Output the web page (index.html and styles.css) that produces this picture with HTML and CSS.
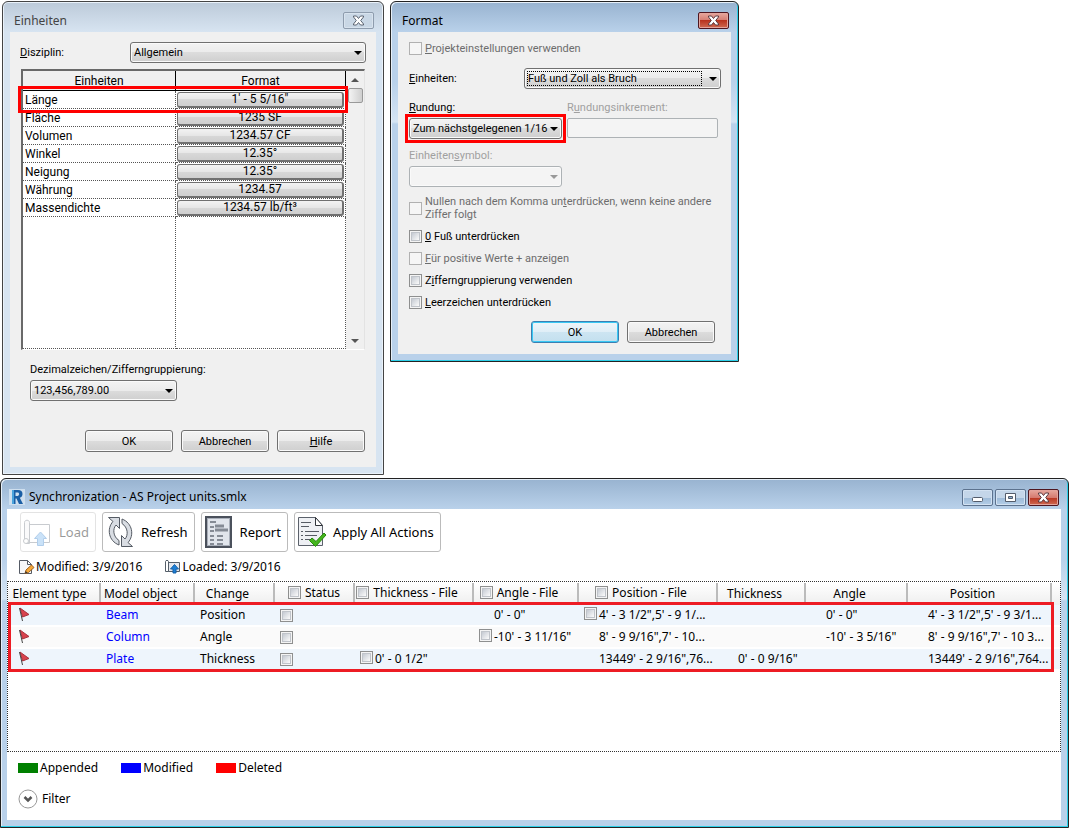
FILE: index.html
```
<!DOCTYPE html>
<html lang="de">
<head>
	<meta charset="utf-8">
	<title>Synchronization - AS Project units.smlx</title>
	<link rel="stylesheet" href="styles.css">
</head>
<body>
	<div class="dialogs">

		<!-- Einheiten -->
		<section class="window inactive units-window">
			<header class="titlebar">
				<h1>Einheiten</h1>
				<button type="button" class="win-button close" aria-label="Schließen">
					<svg width="13" height="11" viewBox="0 0 13 11"><path d="M1.5 1h3l2 2.5L8.500 1h3v1L8.700 5.500l2.800 3.500v1h-3l-2-2.500L4.500 10h-3V9l2.800-3.500L1.500 2z" fill="#fff" stroke="#5b6370"/></svg>
				</button>
			</header>
			<div class="client">
				<div class="field-row">
					<label for="discipline"><u>D</u>isziplin:</label>
					<span class="select-box wide"><select id="discipline"><option>Allgemein</option></select></span>
				</div>

				<div class="units-list">
					<div class="units-scroll">
						<table class="units-table">
							<thead>
								<tr><th>Einheiten</th><th>Format</th></tr>
							</thead>
							<tbody>
								<tr><td>Länge</td><td><button type="button">1' - 5 5/16"</button></td></tr>
								<tr><td>Fläche</td><td><button type="button">1235 SF</button></td></tr>
								<tr><td>Volumen</td><td><button type="button">1234.57 CF</button></td></tr>
								<tr><td>Winkel</td><td><button type="button">12.35°</button></td></tr>
								<tr><td>Neigung</td><td><button type="button">12.35°</button></td></tr>
								<tr><td>Währung</td><td><button type="button">1234.57</button></td></tr>
								<tr><td>Massendichte</td><td><button type="button">1234.57 lb/ft³</button></td></tr>
								<tr class="filler"><td></td><td></td></tr>
							</tbody>
						</table>
					</div>
					<div class="scrollbar">
						<span class="arrow up"></span>
						<span class="thumb"></span>
						<span class="arrow down"></span>
					</div>
					<div class="highlight row-highlight"></div>
				</div>

				<div class="grouping">
					<label for="grouping">Dezimalzeichen/Zifferngruppierung:</label>
					<span class="select-box"><select id="grouping"><option>123,456,789.00</option></select></span>
				</div>

				<div class="actions">
					<button type="button" class="btn">OK</button>
					<button type="button" class="btn">Abbrechen</button>
					<button type="button" class="btn"><u>H</u>ilfe</button>
				</div>
			</div>
		</section>

		<!-- Format -->
		<section class="window format-window">
			<header class="titlebar">
				<h1>Format</h1>
				<button type="button" class="win-button close" aria-label="Schließen">
					<svg width="13" height="11" viewBox="0 0 13 11"><path d="M1.5 1h3l2 2.5L8.500 1h3v1L8.700 5.500l2.800 3.500v1h-3l-2-2.500L4.500 10h-3V9l2.800-3.500L1.500 2z" fill="#fff" stroke="#5b3a40"/></svg>
				</button>
			</header>
			<div class="client">
				<label class="check disabled"><input type="checkbox" disabled><span><u>P</u>rojekteinstellungen verwenden</span></label>

				<div class="field-row">
					<label for="unit"><u>E</u>inheiten:</label>
					<span class="select-box focused"><select id="unit"><option>Fuß und Zoll als Bruch</option></select></span>
				</div>

				<div class="rounding">
					<div class="field">
						<label for="rounding"><u>R</u>undung:</label>
						<div class="marked">
							<span class="select-box"><select id="rounding"><option>Zum nächstgelegenen 1/16</option></select></span>
							<div class="highlight select-highlight"></div>
						</div>
					</div>
					<div class="field disabled">
						<label for="increment">R<u>u</u>ndungsinkrement:</label>
						<input type="text" id="increment" disabled>
					</div>
					<div class="field disabled">
						<label for="symbol">Einheiten<u>s</u>ymbol:</label>
						<span class="select-box"><select id="symbol" disabled><option></option></select></span>
					</div>
				</div>

				<div class="checks">
					<label class="check disabled"><input type="checkbox" disabled><span>Nullen nach dem Komma un<u>t</u>erdrücken, wenn keine andere Ziffer folgt</span></label>
					<label class="check"><input type="checkbox"><span><u>0</u> Fuß unterdrücken</span></label>
					<label class="check disabled"><input type="checkbox" disabled><span><u>F</u>ür positive Werte + anzeigen</span></label>
					<label class="check"><input type="checkbox"><span>Z<u>i</u>fferngruppierung verwenden</span></label>
					<label class="check"><input type="checkbox"><span><u>L</u>eerzeichen unterdrücken</span></label>
				</div>

				<div class="actions">
					<button type="button" class="btn default">OK</button>
					<button type="button" class="btn">Abbrechen</button>
				</div>
			</div>
		</section>
	</div>

	<!-- Synchronization -->
	<section class="window sync-window" lang="en">
		<header class="titlebar">
			<svg class="app-icon" width="16" height="16" viewBox="0 0 16 16">
				<rect width="16" height="16" fill="#cfdfee"/>
				<path d="M3 1h6c3 0 4.500 1.500 4.500 4 0 2-1 3.200-2.700 3.800L14 15h-4L7.500 9.500H6.500V15H3z" fill="#1b5fa5"/>
				<path d="M6.500 3.500H8.500c1 0 1.600.6 1.600 1.600S9.500 7 8.500 7h-2z" fill="#cfdfee"/>
				<path d="M3 1h2v14H3z" fill="#4aa3dc"/>
			</svg>
			<h1>Synchronization - AS Project units.smlx</h1>
			<div class="win-buttons">
				<button type="button" class="win-button" aria-label="Minimize">
					<svg width="13" height="11" viewBox="0 0 13 11"><rect x="1.500" y="5.500" width="10" height="4" rx="1" fill="#fff" stroke="#535c6b"/></svg>
				</button>
				<button type="button" class="win-button" aria-label="Maximize">
					<svg width="13" height="11" viewBox="0 0 13 11"><path d="M1.500 1.500h10v8h-10z" fill="#fff" stroke="#535c6b"/><path d="M4.500 4.500h4v2h-4z" fill="#8fb0d0" stroke="#535c6b"/></svg>
				</button>
				<button type="button" class="win-button close" aria-label="Close">
					<svg width="13" height="11" viewBox="0 0 13 11"><path d="M1.5 1h3l2 2.5L8.500 1h3v1L8.700 5.500l2.800 3.500v1h-3l-2-2.500L4.500 10h-3V9l2.800-3.500L1.500 2z" fill="#fff" stroke="#5b3a40"/></svg>
				</button>
			</div>
		</header>
		<div class="client">
			<div class="toolbar">
				<button type="button" class="tool" disabled>
					<svg width="32" height="32" viewBox="0 0 32 32" fill="none" stroke="#777e88">
						<path d="M8 8.500h19.500v18H6"/>
						<path d="M2.500 24V6.500c0-3 5-3 5 0V24" fill="#f4f5f7"/>
						<circle cx="4" cy="25" r="2.500" fill="#fff"/>
						<path d="M4 27.500h3.500V22"/>
						<path d="M18.500 16l6 6.500h-3v7h-6v-7h-3z" fill="#7db8f0" stroke="#3f87cf"/>
					</svg>
					Load
				</button>
				<button type="button" class="tool">
					<svg width="32" height="34" viewBox="-2 0 32 34" fill="#d9dde3" stroke="#555b64">
						<path d="M2.500 2.500h11v11l-3.500-3.500C6.500 14 7 21.500 13 25.500v4.500C2.500 26 .5 13.500 7 6.500z"/>
						<path d="M26.500 31.500h-11v-11l3.500 3.500C22.500 20 22 12.500 16 8.500V4C26.500 8 28.500 20.500 22 27.500z"/>
					</svg>
					Refresh
				</button>
				<button type="button" class="tool">
					<svg width="32" height="34" viewBox="0 0 32 34">
						<rect x="3" y="2" width="25" height="30" fill="#e1e5ec" stroke="#4b515c" stroke-width="2"/>
						<rect x="4.500" y="3.500" width="22" height="27" fill="none" stroke="#a9afba"/>
						<g stroke="#858b95" stroke-width="2">
							<path d="M7 7h6M7 12h4M7 16h4M7 21h4M7 25h4M7 29h4M14 21h6M14 25h6M14 29h6"/>
							<path d="M12 11h9M12 15h13" stroke-width="3"/>
						</g>
					</svg>
					Report
				</button>
				<button type="button" class="tool">
					<svg width="32" height="34" viewBox="0 0 32 34">
						<path d="M2.500 2.500h17l7 8v20h-24z" fill="#eef0f4" stroke="#5b616b"/>
						<path d="M19.500 2.500v8h7z" fill="#fff" stroke="#30343b"/>
						<path d="M5 7.500h10M5 11.500h8M5 16.500h2M9 16.500h14M5 20.500h2M9 20.500h12M5 24.500h2M9 24.500h8" stroke="#555a63"/>
						<path d="M13.500 25.500l2.500-2.500 4 3.500 8-8.500 2 2L19.500 31.500z" fill="#45b51e" stroke="#278a0c"/>
					</svg>
					Apply All Actions
				</button>
			</div>

			<div class="file-info">
				<span>
					<svg width="18" height="16" viewBox="0 0 18 16">
						<path d="M1.500 1.500h8l4 4v9h-12z" fill="#f7f8fa" stroke="#555b65"/>
						<path d="M9.500 1.500v4h4z" fill="#fff" stroke="#555b65"/>
						<path d="M7 14.500l1-3.500 5.500-5 2.500 2.500-5.500 5z" fill="#f5a93a" stroke="#a2611c"/>
						<path d="M7 14.500l.7-2.500 1.800 1.700z" fill="#333"/>
					</svg>
					Modified: 3/9/2016
				</span>
				<span>
					<svg width="18" height="16" viewBox="0 0 18 16" fill="none" stroke="#555e69">
						<path d="M4 3.500h11.500v9H4" fill="#e5e8ee"/>
						<path d="M1.500 12.500V2.500c0-1.500 3-1.500 3 0v10z" fill="#fff"/>
						<path d="M10.500 5.500l4 4.500h-2.500v4h-3v-4H6.500z" fill="#1d7fd6" stroke="#1763aa"/>
					</svg>
					Loaded: 3/9/2016
				</span>
			</div>

			<div class="pane">
				<table class="changes">
					<colgroup>
						<col class="c-type"><col class="c-object"><col class="c-change"><col class="c-status"><col class="c-thick-file"><col class="c-angle-file"><col class="c-pos-file"><col class="c-thick"><col class="c-angle"><col class="c-pos"><col>
					</colgroup>
					<thead>
						<tr>
							<th class="type">Element type</th>
							<th>Model object</th>
							<th>Change</th>
							<th class="status"><label><input type="checkbox"> Status</label></th>
							<th><label><input type="checkbox"> Thickness - File</label></th>
							<th><label><input type="checkbox"> Angle - File</label></th>
							<th><label><input type="checkbox"> Position - File</label></th>
							<th>Thickness</th>
							<th>Angle</th>
							<th>Position</th>
							<th></th>
						</tr>
					</thead>
					<tbody>
						<tr>
							<td class="flag"><svg width="16" height="16" viewBox="0 0 16 16"><path d="M2 1l9 6.500-6.500 2.500z" fill="#d9434e" stroke="#a8323c"/><path d="M1.500 1l3 13" stroke="#444" fill="none"/></svg></td>
							<td><a href="#">Beam</a></td>
							<td>Position</td>
							<td><input type="checkbox" aria-label="Beam"></td>
							<td></td>
							<td class="value">0' - 0"</td>
							<td><label><input type="checkbox">4' - 3 1/2",5' - 9 1/...</label></td>
							<td></td>
							<td class="value">0' - 0"</td>
							<td class="value">4' - 3 1/2",5' - 9 3/1...</td>
							<td></td>
						</tr>
						<tr>
							<td class="flag"><svg width="16" height="16" viewBox="0 0 16 16"><path d="M2 1l9 6.500-6.500 2.500z" fill="#d9434e" stroke="#a8323c"/><path d="M1.500 1l3 13" stroke="#444" fill="none"/></svg></td>
							<td><a href="#">Column</a></td>
							<td>Angle</td>
							<td><input type="checkbox" aria-label="Column"></td>
							<td></td>
							<td><label><input type="checkbox">-10' - 3 11/16"</label></td>
							<td class="value">8' - 9 9/16",7' - 10...</td>
							<td></td>
							<td class="value">-10' - 3 5/16"</td>
							<td class="value">8' - 9 9/16",7' - 10 3...</td>
							<td></td>
						</tr>
						<tr>
							<td class="flag"><svg width="16" height="16" viewBox="0 0 16 16"><path d="M2 1l9 6.500-6.500 2.500z" fill="#d9434e" stroke="#a8323c"/><path d="M1.500 1l3 13" stroke="#444" fill="none"/></svg></td>
							<td><a href="#">Plate</a></td>
							<td>Thickness</td>
							<td><input type="checkbox" aria-label="Plate"></td>
							<td><label><input type="checkbox">0' - 0 1/2"</label></td>
							<td></td>
							<td class="value">13449' - 2 9/16",76...</td>
							<td class="value">0' - 0 9/16"</td>
							<td></td>
							<td class="value">13449' - 2 9/16",764...</td>
							<td></td>
						</tr>
					</tbody>
				</table>
				<div class="highlight changes-highlight"></div>
			</div>

			<ul class="legend">
				<li class="appended">Appended</li>
				<li class="modified">Modified</li>
				<li class="deleted">Deleted</li>
			</ul>

			<button type="button" class="filter">
				<svg width="20" height="20" viewBox="0 0 20 20" fill="none"><circle cx="10" cy="10" r="9" fill="#fff" stroke="#999"/><path d="M6.500 8l3.500 3.500L13.500 8" stroke="#555" stroke-width="2.500"/></svg>
				Filter
			</button>
		</div>
	</section>
</body>
</html>
```
FILE: styles.css
```
* {
	box-sizing: border-box;
}

body {
	margin: 0;
	background-color: #fff;
	font-family: Roboto, "Liberation Sans", sans-serif;
	font-size: 11px;
	line-height: 13px;
	color: #000;
}

button, input, select {
	font: inherit;
	color: inherit;
	margin: 0;
}

h1 {
	flex: 1;
	margin: 0;
	font-family: "Noto Sans", "Open Sans", sans-serif;
	font-size: 12px;
	font-weight: normal;
}

/* windows */
.dialogs {
	display: flex;
	align-items: flex-start;
	gap: 6px;
	padding: 1px 2px 3px;
}

.window {
	border: 1px solid #222;
	border-radius: 6px 6px 0 0;
	padding: 0 7px 7px;
	background: linear-gradient(#98b3d0 0, #b9d1ea 30px, #b9d1ea 80px, #d5e4f3 120px, #b9d1ea 122px);
	box-shadow: inset -1px -1px #2ccfe8, inset 1px 1px #e6eff8;
}

.window.inactive {
	border-color: #444;
	background: linear-gradient(#bccad9, #d7e4f1 30px);
	box-shadow: inset 0 0 0 1px #eaf2fa;
}

.units-window {
	flex: 0 1 382px;
}

.format-window {
	flex: 0 1 349px;
}

.sync-window {
	margin-right: 1px;
	padding-left: 6px;
	font-family: "Noto Sans", "Open Sans", sans-serif;
	font-size: 12px;
	line-height: 16px;
}

.titlebar {
	display: flex;
	align-items: center;
	height: 30px;
	padding: 6px 2px 0 4px;
}

.sync-window .titlebar {
	padding-left: 2px;
}

.inactive h1 {
	color: #444;
}

.client {
	background-color: #f0f0f0;
}

.win-buttons {
	display: flex;
	gap: 2px;
}

.win-button {
	display: flex;
	align-items: center;
	justify-content: center;
	width: 31px;
	height: 17px;
	padding: 0;
	border: 1px solid #5c728e;
	border-radius: 2px;
	background: linear-gradient(#c4d6e9 50%, #9cb9d6 50%, #b4cee8);
	box-shadow: inset 0 0 0 1px #d3e2f2;
}

.win-button.close {
	border-color: #4e1620;
	background: linear-gradient(#e7a89e, #d57b70 50%, #b8331f 50%, #cf6a52);
	box-shadow: inset 0 0 0 1px #e3a49c;
}

.inactive .win-button.close {
	border-color: #8e9cad;
	background: #c9d7e5;
	box-shadow: inset 0 0 0 1px #d8e3ee;
}

/* controls */
.select-box {
	display: block;
	position: relative;
}

.select-box::after {
	content: "";
	position: absolute;
	right: 4px;
	top: 9px;
	border: 4px solid transparent;
	border-top-color: #000;
	border-bottom: 0;
	pointer-events: none;
}

.disabled .select-box::after {
	border-top-color: #999;
}

select {
	display: block;
	appearance: none;
	width: 100%;
	height: 21px;
	padding: 0 12px 0 3px;
	border: 1px solid #707070;
	border-radius: 3px;
	background: linear-gradient(#f3f3f3, #ebebeb 50%, #dcdcdc 50%, #cfcfcf);
	box-shadow: inset 0 0 0 1px #fafafa;
}

select:disabled, input[type=text]:disabled {
	border: 1px solid #adb2b5;
	background: #f4f4f4;
	opacity: 1;
}

input[type=text] {
	display: block;
	width: 100%;
	height: 20px;
	border-radius: 2px;
}

.focused::before {
	content: "";
	position: absolute;
	inset: 3px 19px 3px 3px;
	border: 1px dotted #000;
	pointer-events: none;
}

input[type=checkbox] {
	appearance: none;
	flex: none;
	width: 13px;
	height: 13px;
	border: 1px solid #8e8f8f;
	background: linear-gradient(135deg, #c6cbd3 20%, #fafafa 80%);
	box-shadow: inset 0 0 0 1px #f4f4f4, inset 0 0 0 2px #c0c4ca;
}

input[type=checkbox]:disabled {
	border-color: #b1b1b1;
	background: #f6f6f6;
	box-shadow: none;
}

.btn {
	width: 88px;
	height: 22px;
	padding: 0;
	border: 1px solid #707070;
	border-radius: 3px;
	background: linear-gradient(#f3f3f3, #ebebeb 50%, #dcdcdc 50%, #cfcfcf);
	box-shadow: inset 0 0 0 1px #fafafa;
}

.btn.default {
	border-color: #3c7fb1;
	background: linear-gradient(#eef5f9, #dfeef7 50%, #cde5f2 50%, #c3dfee);
	box-shadow: inset 0 0 0 1px #38c8f4;
}

.actions {
	display: flex;
	justify-content: flex-end;
	gap: 8px;
}

.highlight {
	position: absolute;
	border: 3px solid #f00;
	pointer-events: none;
}

/* Einheiten */
.units-window .client {
	padding: 10px 10px 15px;
}

.units-window .field-row {
	display: flex;
	align-items: center;
}

.units-window .field-row label {
	width: 110px;
}

.select-box.wide {
	flex: 1;
}

.units-list {
	display: flex;
	position: relative;
	margin: 6px 1px 0;
	border: 2px solid #696969;
	border-right: 1px solid #e3e3e3;
	border-bottom: 1px solid #fff;
	background-color: #fff;
}

.units-scroll {
	flex: 1;
}

.units-table {
	width: 100%;
	border-collapse: separate;
	border-spacing: 0;
	table-layout: fixed;
	font-size: 12px;
	line-height: 16px;
}

.units-table th {
	height: 20px;
	padding: 0;
	border-right: 1px solid #000;
	border-bottom: 1px solid #000;
	background-color: #f0f0f0;
	font-weight: normal;
}

.units-table th:first-child {
	width: 153px;
}

.units-table td {
	height: 18px;
	padding: 0 0 0 2px;
	border-right: 1px dotted #555;
	border-bottom: 1px dotted #555;
}

.units-table td:last-child {
	padding: 0 1px;
}

.units-table button {
	display: block;
	width: 100%;
	height: 16px;
	padding: 0;
	border: 1px solid #707070;
	border-width: 1px 2px 2px 1px;
	border-radius: 3px;
	background: linear-gradient(#f3f3f3, #e6e6e6 50%, #d8d8d8 50%, #cfcfcf);
	line-height: 13px;
}

.units-table .filler td {
	height: 132px;
}

.scrollbar {
	display: flex;
	flex-direction: column;
	align-items: center;
	width: 18px;
	padding-bottom: 6px;
	background-color: #f0f0f0;
}

.arrow {
	border: 4px solid transparent;
}

.arrow.up {
	margin: 7px 0 6px;
	border-top: 0;
	border-bottom-color: #555;
}

.arrow.down {
	margin-top: auto;
	border-bottom: 0;
	border-top-color: #555;
}

.thumb {
	width: 15px;
	height: 15px;
	border: 1px solid #999;
	border-radius: 2px;
	background: linear-gradient(90deg, #f3f3f3, #cfcfcf);
}

.row-highlight {
	top: 15px;
	left: -5px;
	right: 16px;
	height: 27px;
}

.grouping {
	margin: 13px 0 29px 10px;
}

.grouping label {
	display: block;
	margin-bottom: 4px;
}

.grouping .select-box {
	width: 147px;
}

.units-window .actions {
	margin-right: 1px;
}

/* Format */
.format-window .client {
	padding: 10px 16px 11px 11px;
}

.format-window .field-row {
	display: flex;
	align-items: center;
	margin: 13px -6px 12px 0;
}

.format-window .field-row label {
	width: 115px;
}

.format-window .field-row .select-box {
	flex: 1;
}

.rounding {
	display: grid;
	grid-template-columns: 153px 1fr;
	gap: 10px 5px;
	margin-right: -3px;
}

.field label {
	display: block;
	margin-bottom: 4px;
}

.field.disabled {
	color: #a0a0a0;
}

.marked {
	position: relative;
}

.select-highlight {
	inset: -4px;
}

.check {
	display: flex;
	align-items: center;
	gap: 3px;
}

.check.disabled {
	color: #6d6d6d;
}

.checks {
	display: grid;
	gap: 9px;
	margin: 8px -8px 12px 0;
}

/* Synchronization */
.sync-window .client {
	background-color: #fff;
	padding-bottom: 11px;
}

.app-icon {
	margin-right: 4px;
}

.toolbar {
	display: flex;
	gap: 6px;
	padding: 3px 13px 0;
}

.tool {
	display: flex;
	align-items: center;
	gap: 5px;
	height: 40px;
	padding: 0 6px 0 1px;
	border: 1px solid #bbb;
	border-radius: 3px;
	background-color: #fff;
	font-size: 13px;
}

.tool:disabled {
	opacity: 0.4;
}

.file-info {
	display: flex;
	gap: 22px;
	padding: 7px 11px 6px;
}

.file-info span {
	display: flex;
	align-items: center;
}

.pane {
	position: relative;
	min-height: 171px;
	padding-top: 1px;
	border: 1px dotted #333;
}

.changes {
	width: 100%;
	border-collapse: separate;
	border-spacing: 0;
	table-layout: fixed;
	white-space: nowrap;
}

.c-type { width: 93px; }
.c-object { width: 94px; }
.c-change { width: 80px; }
.c-status { width: 80px; }
.c-thick-file { width: 119px; }
.c-angle-file { width: 105px; }
.c-pos-file { width: 139px; }
.c-thick { width: 88px; }
.c-angle { width: 102px; }
.c-pos { width: 144px; }

.changes th {
	height: 22px;
	padding: 0 13px 0 0;
	border-right: 2px solid #bbb;
	background: linear-gradient(#fff, #eee);
	font-weight: normal;
}

.changes th.type {
	padding-right: 8px;
}

.changes th.status {
	padding: 0;
}

.changes th:last-child {
	border-right: 0;
}

.changes th label {
	display: inline-flex;
	align-items: center;
	gap: 4px;
}

.changes td {
	height: 22px;
	padding: 0 0 0 5px;
	border-bottom: 2px solid #fff;
	background-color: #fafafa;
}

.changes tr:nth-child(odd) td {
	background-color: #eef5fc;
}

.changes td.flag {
	padding-left: 10px;
}

.changes td.value {
	padding-left: 20px;
}

.changes td svg, .changes td > input {
	display: block;
}

.changes td label {
	display: flex;
	gap: 2px;
}

.changes a {
	color: #00f;
	text-decoration: none;
}

.changes-highlight {
	top: 20px;
	left: 0;
	right: 6px;
	height: 70px;
	border-color: #ed1c24;
}

.legend {
	display: flex;
	gap: 23px;
	margin: 8px 11px 13px;
	padding: 0;
	list-style: none;
}

.legend li {
	display: flex;
	align-items: center;
	gap: 2px;
}

.legend li::before {
	content: "";
	width: 20px;
	height: 10px;
	background-color: #008000;
}

.legend .modified::before {
	background-color: #00f;
}

.legend .deleted::before {
	background-color: #f00;
}

.filter {
	display: flex;
	align-items: center;
	gap: 4px;
	margin-left: 11px;
	padding: 0;
	border: 0;
	background: none;
}
```
